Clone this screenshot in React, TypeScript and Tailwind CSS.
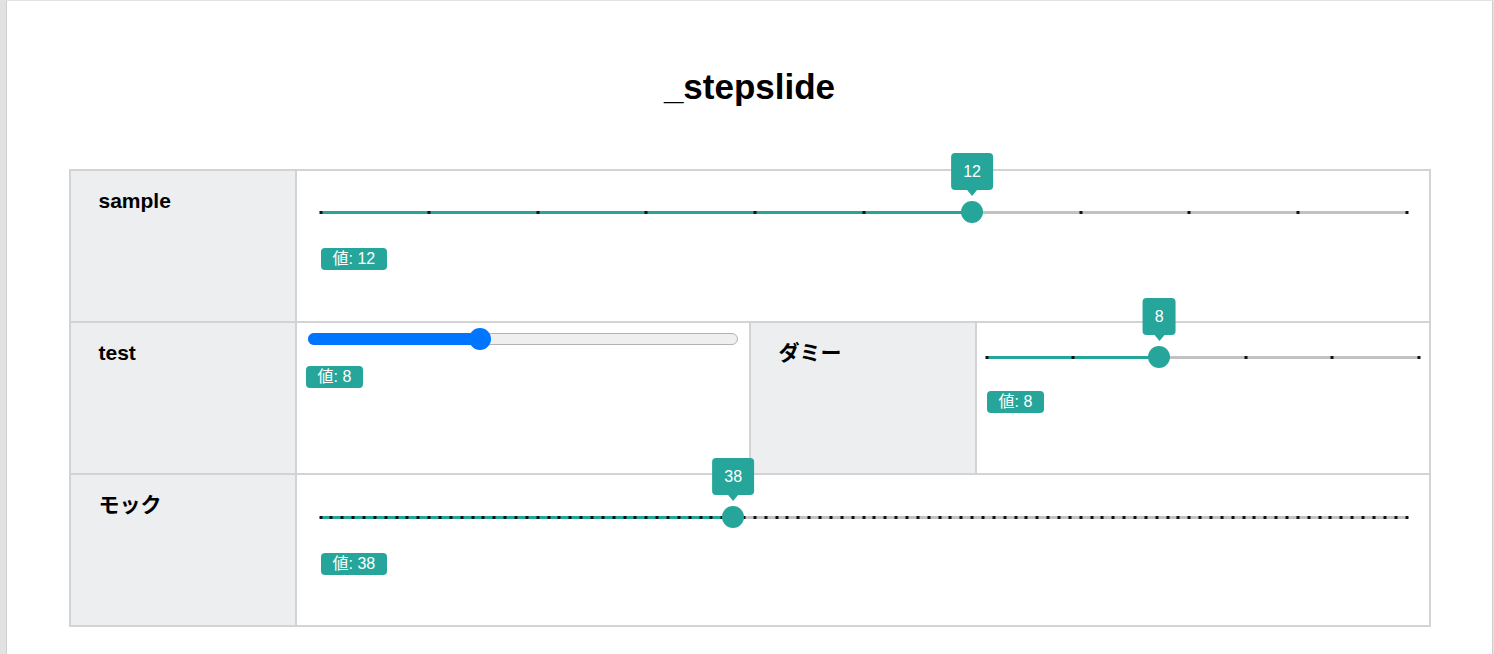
import React from "react";

const teal = "bg-[#26a69a]";

function Badge({ value }: { value: number }) {
  return (
    <span className="inline-block rounded-[4px] bg-[#26a69a] px-[12px] text-[16px] leading-[22px] text-white">
      値: {value}
    </span>
  );
}

interface StepSliderProps {
  value: number;
  min: number;
  max: number;
  step: number;
}

function StepSlider({ value, min, max, step }: StepSliderProps) {
  const pct = ((value - min) / (max - min)) * 100;
  const count = Math.round((max - min) / step);
  const ticks = Array.from({ length: count + 1 }, (_, i) => (i / count) * 100);

  return (
    <div className="relative h-[22px] w-full">
      {/* track */}
      <div className="absolute left-0 right-0 top-[9.5px] h-[3px] bg-[#c2c2c2]" />
      <div
        className={`absolute left-0 top-[9.5px] h-[3px] ${teal}`}
        style={{ width: `${pct}%` }}
      />
      {ticks.map((t, i) => (
        <div
          key={i}
          className="absolute top-[9.5px] h-[3px] w-[3px] -translate-x-1/2 bg-[#111]"
          style={{ left: `${t}%` }}
        />
      ))}
      {/* thumb */}
      <div
        className="absolute top-0 h-[22px] w-[22px] -translate-x-1/2 rounded-full bg-[#26a69a]"
        style={{ left: `${pct}%` }}
      />
      {/* tooltip */}
      <div
        className="absolute bottom-[27px] flex -translate-x-1/2 flex-col items-center"
        style={{ left: `${pct}%` }}
      >
        <div className="flex h-[37px] items-center rounded-[4px] bg-[#26a69a] px-3 text-[16px] leading-[21px] text-white">
          {value}
        </div>
        <div className="h-0 w-0 border-x-[5px] border-t-[6px] border-x-transparent border-t-[#26a69a]" />
      </div>
    </div>
  );
}

function NativeRange({ value, max }: { value: number; max: number }) {
  const pct = (value / max) * 100;
  return (
    <div className="relative mx-[2px] h-[22px]">
      <div className="absolute left-0 right-0 top-[5px] h-[12px] rounded-full border border-[#b3b3b3] bg-[#efefef]" />
      <div
        className="absolute left-0 top-[5px] h-[12px] rounded-l-full bg-[#0075ff]"
        style={{ width: `${pct}%` }}
      />
      <div
        className="absolute top-0 h-[22px] w-[22px] -translate-x-1/2 rounded-full bg-[#0075ff]"
        style={{ left: `${pct}%` }}
      />
    </div>
  );
}

function Label({ children }: { children: React.ReactNode }) {
  return (
    <div className="bg-[#edeef0] pl-[28px] pt-[18px] text-[21px] font-bold leading-[24px] text-black">
      {children}
    </div>
  );
}

export default function App() {
  return (
    <div className="min-h-screen bg-[#e2e2e2] pl-[6px] pr-[1px] pt-[1px] font-['Liberation_Sans','Noto_Sans_CJK_JP',sans-serif]">
      <div className="min-h-[653px] border-x border-[#cfcfcf] bg-white">
        <h1 className="pt-[66px] text-center text-[35px] font-bold leading-[40px] text-black">
          _stepslide
        </h1>

        <div className="mx-auto mt-[62px] grid w-[1362px] grid-cols-[224px_452px_224px_452px] grid-rows-[150px_150px_150px] gap-[2px] bg-[#d3d3d3] p-[2px]">
          {/* sample */}
          <Label>sample</Label>
          <div className="col-span-3 bg-white pl-[24px] pr-[22px] pt-[30px]">
            <StepSlider value={12} min={0} max={20} step={2} />
            <div className="mt-[24px]">
              <Badge value={12} />
            </div>
          </div>

          {/* test + dummy */}
          <Label>test</Label>
          <div className="bg-white px-[9px] pt-[5px]">
            <NativeRange value={8} max={20} />
            <div className="mt-[15px]">
              <Badge value={8} />
            </div>
          </div>
          <Label>ダミー</Label>
          <div className="bg-white px-[10px] pt-[23px]">
            <StepSlider value={8} min={0} max={20} step={4} />
            <div className="mt-[22px]">
              <Badge value={8} />
            </div>
          </div>

          {/* mock */}
          <Label>モック</Label>
          <div className="col-span-3 bg-white pl-[24px] pr-[22px] pt-[31px]">
            <StepSlider value={38} min={0} max={100} step={1} />
            <div className="mt-[24px]">
              <Badge value={38} />
            </div>
          </div>
        </div>
      </div>
    </div>
  );
}
